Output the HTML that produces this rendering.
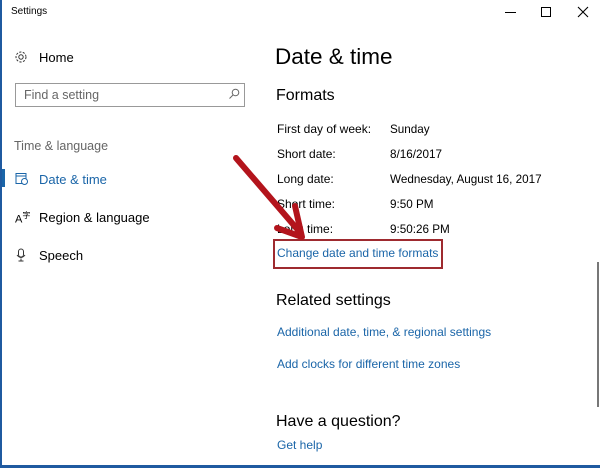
<!DOCTYPE html>
<html><head><meta charset="utf-8"><style>
*{margin:0;padding:0;box-sizing:border-box}
body{width:600px;height:468px;background:#fff;position:relative;overflow:hidden;font-family:"Liberation Sans",sans-serif;color:#000}
.a{position:absolute;white-space:nowrap}
.blue{color:#1a65a8}
.lbl{font-size:12px;left:277px}
.val{font-size:11.7px;left:390px;margin-top:1px}
</style></head><body>
<div class="a" style="left:0;top:0;width:2px;height:468px;background:#1f5aa0"></div>
<div class="a" style="left:0;top:465px;width:600px;height:3px;background:#1f5aa0"></div>
<div class="a" style="left:597px;top:262px;width:2px;height:145px;background:#777"></div>
<div class="a" style="left:11px;top:6px;font-size:10px">Settings</div>
<div class="a" style="left:505px;top:12px;width:11px;height:1px;background:#000"></div>
<div class="a" style="left:541px;top:7px;width:10px;height:10px;border:1px solid #000"></div>
<svg class="a" style="left:577px;top:6px" width="12" height="12"><path d="M1 1L11 11M11 1L1 11" stroke="#000" stroke-width="1.1"/></svg>
<svg class="a" style="left:14px;top:50px" width="14" height="14" viewBox="0 0 14 14"><circle cx="7" cy="7" r="2.2" fill="none" stroke="#333"/><circle cx="7" cy="7" r="5" fill="none" stroke="#333" stroke-dasharray="2.2 1.4"/></svg>
<div class="a" style="left:39px;top:50px;font-size:13px">Home</div>
<div class="a" style="left:15px;top:83px;width:230px;height:24px;border:1px solid #999"></div>
<div class="a" style="left:24px;top:88px;font-size:12.5px;color:#666">Find a setting</div>
<svg class="a" style="left:228px;top:88px" width="12" height="12"><circle cx="7.5" cy="4.5" r="3.3" fill="none" stroke="#666"/><path d="M5 7L1.5 10.5" stroke="#666"/></svg>
<div class="a" style="left:14px;top:139px;font-size:12.5px;color:#666">Time &amp; language</div>
<div class="a" style="left:2px;top:169px;width:3px;height:18px;background:#1a65a8"></div>
<svg class="a" style="left:15px;top:172px" width="13" height="13"><rect x="1" y="1.5" width="10" height="10" fill="none" stroke="#1a65a8"/><path d="M1 4H11" stroke="#1a65a8"/><circle cx="9.5" cy="9.5" r="3" fill="#fff" stroke="#1a65a8"/></svg>
<div class="a blue" style="left:39px;top:172px;font-size:13px">Date &amp; time</div>
<div class="a" style="left:15px;top:210px;font-size:11px">A<sup style="font-size:8px">字</sup></div>
<div class="a" style="left:39px;top:210px;font-size:13px">Region &amp; language</div>
<svg class="a" style="left:16px;top:248px" width="10" height="14"><rect x="2.5" y="1" width="5" height="8" rx="2.5" fill="none" stroke="#333"/><path d="M1 7Q5 12 9 7M5 10.5V13M2.5 13H7.5" fill="none" stroke="#333"/></svg>
<div class="a" style="left:39px;top:248px;font-size:13px">Speech</div>
<div class="a" style="left:275px;top:44px;font-size:22.5px">Date &amp; time</div>
<div class="a" style="left:276px;top:87px;font-size:16px">Formats</div>
<div class="a lbl" style="top:122px">First day of week:</div><div class="a val" style="top:122px">Sunday</div>
<div class="a lbl" style="top:147px">Short date:</div><div class="a val" style="top:147px">8/16/2017</div>
<div class="a lbl" style="top:172px">Long date:</div><div class="a val" style="top:172px">Wednesday, August 16, 2017</div>
<div class="a lbl" style="top:197px">Short time:</div><div class="a val" style="top:197px">9:50 PM</div>
<div class="a lbl" style="top:222px">Long time:</div><div class="a val" style="top:222px">9:50:26 PM</div>
<div class="a" style="left:273px;top:239px;width:170px;height:30px;border:2px solid #9e2a2f"></div>
<div class="a blue" style="left:277px;top:246px;font-size:12px">Change date and time formats</div>
<div class="a" style="left:276px;top:292px;font-size:16px">Related settings</div>
<div class="a blue" style="left:277px;top:325px;font-size:12px">Additional date, time, &amp; regional settings</div>
<div class="a blue" style="left:277px;top:357px;font-size:12px">Add clocks for different time zones</div>
<div class="a" style="left:276px;top:413px;font-size:16px">Have a question?</div>
<div class="a blue" style="left:277px;top:438px;font-size:12px">Get help</div>
<svg class="a" style="left:0;top:0" width="600" height="468"><path d="M236 158L298 230" stroke="#b3141c" stroke-width="6" stroke-linecap="round"/><path d="M302 237L277 228M302 237L295 206" stroke="#b3141c" stroke-width="6" stroke-linecap="round"/></svg>
</body></html>
